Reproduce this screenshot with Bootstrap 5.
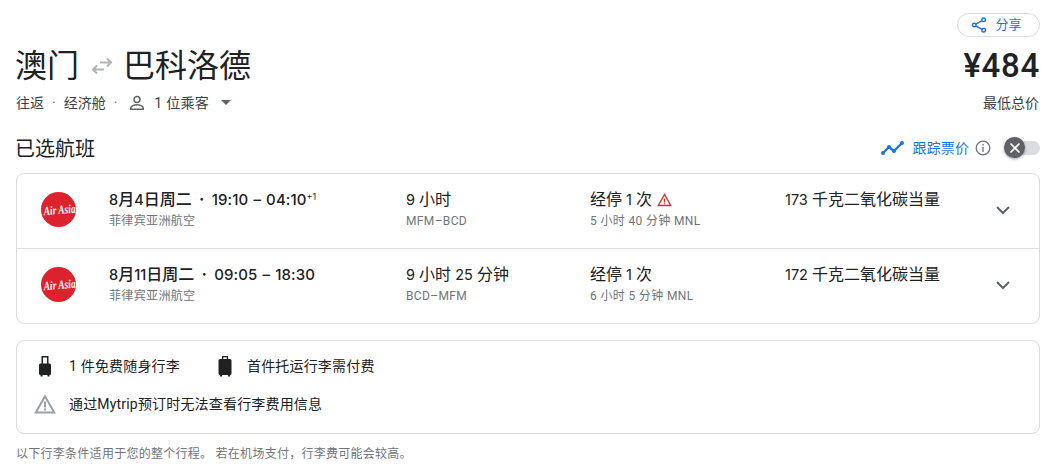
<!DOCTYPE html>
<html lang="zh-CN">
<head>
<meta charset="utf-8">
<title>航班</title>
<link href="https://cdn.jsdelivr.net/npm/bootstrap@5.3.0/dist/css/bootstrap.min.css" rel="stylesheet">
<style>
html,body{height:469px;overflow:hidden;background:#fff}
body{font-family:Roboto,"Noto Sans CJK SC",sans-serif;color:#202124;font-size:14px;line-height:20px}
.pg{padding:13px 14px 0 16px}
.share-btn{height:24px;width:83px;border:1px solid #dadce0;border-radius:12px;color:#1a73e8;font-size:13px;background:#fff;gap:8px;padding:0 4px 0 0}
.title-row{height:56px;padding-top:2px}
.ttl{font-size:32px;line-height:54px;font-weight:400;color:#202124;margin-left:-1px}
.swap{margin:0 11px 0 12px;width:22px;height:22px}
.price{font-size:33px;line-height:54px;font-weight:500;color:#202124;letter-spacing:.7px}
.meta{height:19px;color:#3c4043;font-size:14px}
.dot{margin:0 8px;color:#5f6368}
.who-ic{margin:0 7px 0 2px}
.who{letter-spacing:.25px}
.low{font-size:14px;color:#3c4043;padding-right:1px}
.sec{margin-top:17px;height:38px}
.sec-t{font-size:20px;line-height:28px;color:#202124;margin-left:-1px;padding-top:2px}
.track{color:#1a73e8;font-size:14px;letter-spacing:.1px}
.info-ic{margin-left:6px}
.tog{width:35px;height:14px;border-radius:7px;background:#dadce0;margin-left:14px;position:relative}
.knob{position:absolute;left:-1px;top:-4px;width:21px;height:21px;border-radius:50%;background:#5f6368;box-shadow:0 1px 3px rgba(60,64,67,.5);display:flex;align-items:center;justify-content:center}
.flights{margin-top:6px;border:1px solid #dadce0;border-radius:8px;width:1024px}
.frow{height:74px;padding:15px 0 0 24px}
.frow+.frow{height:75px;border-top:1px solid #dadce0}
.logo-c{width:35px;height:35px;margin:3px 33px 0 0;flex:none}
.c1{width:297px}.c2{width:184px}.c3{width:195px}.c4{width:210px}
.f-main{font-family:Inter,"Noto Sans CJK SC",sans-serif;font-size:16px;line-height:20px;color:#202124}
.dg{font-size:14.5px}
.tm{font-weight:500;white-space:nowrap}
.tt{font-size:15px;letter-spacing:.1px;word-spacing:1px}
.tm sup{font-size:9px;font-weight:400;top:-.6em;letter-spacing:0}
.sep{display:inline-block;width:20px;text-align:center;font-weight:700}
.f-sub{font-size:12px;line-height:16px;color:#70757a;letter-spacing:.35px;margin-top:3px}
.warn-s{margin-left:5px}
.chev{margin-top:13px}
.bags{margin-top:16px;height:94px;border:1px solid #dadce0;border-radius:8px;width:1024px;padding:12px 0 0 20px;font-size:14px;letter-spacing:.18px}
.bag-r{height:25px}
.bag-ic{width:16px;height:22px;margin-right:16px}
.bag-2{margin:0 14px 0 37px}
.warn-ic{width:22px;height:20px;margin:0 13px 0 -3px}
.bag-w{margin-top:13px}
.foot{margin-top:10px;font-size:12px;color:#70757a;line-height:20px;letter-spacing:.27px}
.caret{width:0;height:0;border-left:5px solid transparent;border-right:5px solid transparent;border-top:5px solid #5f6368;margin-left:12px}
.lg-t{font-family:"Liberation Serif",serif;font-style:italic;font-weight:700;font-size:9.5px;fill:#fff}
</style>
</head>
<body>
<div class="pg">
  <div class="d-flex justify-content-end">
    <button class="share-btn d-flex align-items-center justify-content-center" type="button">
      <svg width="16" height="16" viewBox="0 0 16 16" fill="none" stroke="#1a73e8" stroke-width="1.4"><circle cx="12.600" cy="2.800" r="1.800"/><circle cx="3.200" cy="8" r="1.800"/><circle cx="12.600" cy="13.200" r="1.800"/><path d="M4.800 7.100 11 3.700M4.800 8.900l6.200 3.400"/></svg>
      <span>分享</span>
    </button>
  </div>
  <div class="title-row d-flex justify-content-between">
    <div class="d-flex align-items-center">
      <span class="ttl">澳门</span>
      <svg class="swap" viewBox="0 0 22 22" fill="none" stroke="#b0b3b8" stroke-width="2"><path d="M9 7.500h11M16 3.500l4 4-4 4"/><path d="M13 14.500H2M6 10.500l-4 4 4 4"/></svg>
      <span class="ttl">巴科洛德</span>
    </div>
    <div class="price">¥484</div>
  </div>
  <div class="meta d-flex justify-content-between align-items-center">
    <div class="d-flex align-items-center">
      <span>往返</span><span class="dot">·</span><span>经济舱</span><span class="dot">·</span>
      <svg class="who-ic" width="20" height="20" viewBox="0 0 20 20" fill="none" stroke="#5f6368" stroke-width="1.500"><circle cx="10" cy="6.500" r="3"/><path d="M3.800 16.200v-1.400c0-1.900 3.600-3 6.200-3s6.200 1.100 6.200 3v1.400z"/></svg>
      <span class="who">1 位乘客</span><span class="caret"></span>
    </div>
    <div class="low">最低总价</div>
  </div>
  <div class="sec d-flex justify-content-between align-items-center">
    <div class="sec-t">已选航班</div>
    <div class="d-flex align-items-center">
      <svg class="me-2" width="24" height="16" viewBox="0 0 24 16" fill="#1a73e8" stroke="#1a73e8" stroke-width="2.400"><path d="M2 13l6-6 5 4 8-8" fill="none"/><circle cx="2" cy="13" r=".8"/><circle cx="8" cy="7" r=".8"/><circle cx="13" cy="11" r=".8"/><circle cx="21" cy="3" r=".8"/></svg>
      <span class="track">跟踪票价</span>
      <svg class="info-ic" width="16" height="16" viewBox="0 0 16 16" fill="none" stroke="#70757a" stroke-width="1.300"><circle cx="8" cy="8" r="6.800"/><path d="M8 7v5M8 4v1.600"/></svg>
      <div class="tog"><div class="knob"><svg width="12" height="12" viewBox="0 0 12 12" stroke="#fff" stroke-width="1.600"><path d="M1.500 1.500l9 9M10.500 1.500l-9 9"/></svg></div></div>
    </div>
  </div>

  <div class="flights">
    <div class="frow d-flex">
      <svg class="logo-c" viewBox="0 0 35 35"><circle cx="17.500" cy="17.500" r="17.500" fill="#dc222c"/><text class="lg-t" transform="rotate(-5 17.500 17.500) translate(2.500 22) scale(1 1.300)">Air Asia</text></svg>
      <div class="c1"><div class="f-main tm"><span class="dg">8</span>月<span class="dg">4</span>日周二<span class="sep">·</span><span class="tt">19:10 – 04:10</span><sup>+1</sup></div><div class="f-sub">菲律宾亚洲航空</div></div>
      <div class="c2"><div class="f-main"><span class="dg">9 </span>小时</div><div class="f-sub">MFM–BCD</div></div>
      <div class="c3"><div class="f-main d-flex align-items-center"><span>经停<span class="dg"> 1 </span>次</span><svg class="warn-s" width="15" height="14" viewBox="0 0 15 14" fill="none" stroke="#d93025" stroke-width="1.400"><path d="M7.500 1.500 1.300 12.500h12.400zM7.500 5.500v4M7.500 10.300v1"/></svg></div><div class="f-sub">5 小时 40 分钟 MNL</div></div>
      <div class="c4"><div class="f-main"><span class="dg">173 </span>千克二氧化碳当量</div></div>
      <svg class="chev" width="16" height="16" viewBox="0 0 16 16" fill="none" stroke="#5f6368" stroke-width="2"><path d="M2 5l6 6 6-6"/></svg>
    </div>
    <div class="frow d-flex">
      <svg class="logo-c" viewBox="0 0 35 35"><circle cx="17.500" cy="17.500" r="17.500" fill="#dc222c"/><text class="lg-t" transform="rotate(-5 17.500 17.500) translate(2.500 22) scale(1 1.300)">Air Asia</text></svg>
      <div class="c1"><div class="f-main tm"><span class="dg">8</span>月<span class="dg">11</span>日周二<span class="sep">·</span><span class="tt">09:05 – 18:30</span></div><div class="f-sub">菲律宾亚洲航空</div></div>
      <div class="c2"><div class="f-main"><span class="dg">9 </span>小时<span class="dg"> 25 </span>分钟</div><div class="f-sub">BCD–MFM</div></div>
      <div class="c3"><div class="f-main">经停<span class="dg"> 1 </span>次</div><div class="f-sub">6 小时 5 分钟 MNL</div></div>
      <div class="c4"><div class="f-main"><span class="dg">172 </span>千克二氧化碳当量</div></div>
      <svg class="chev" width="16" height="16" viewBox="0 0 16 16" fill="none" stroke="#5f6368" stroke-width="2"><path d="M2 5l6 6 6-6"/></svg>
    </div>
  </div>

  <div class="bags">
    <div class="bag-r d-flex align-items-center">
      <svg class="bag-ic" viewBox="0 0 16 22" fill="#202124"><path d="M4.500 1h7v7.500h1a1.500 1.500 0 0 1 1.500 1.500v8.500a1.500 1.500 0 0 1-1.500 1.500h-9A1.500 1.500 0 0 1 2 18.500V10a1.500 1.500 0 0 1 1.500-1.500h1zM6 2.500v6h4v-6zM3.500 20h2v1.500h-2zm7 0h2v1.500h-2z"/></svg>
      <span>1 件免费随身行李</span>
      <svg class="bag-ic bag-2" viewBox="0 0 16 22" fill="#202124"><path d="M5 1h6v3h2A1.500 1.500 0 0 1 14.500 5.500v13A1.500 1.500 0 0 1 13 20H3a1.500 1.500 0 0 1-1.500-1.500v-13A1.500 1.500 0 0 1 3 4h2zm1.300 1.300V4h3.400V2.300zM3 20h2v1.500H3zm8 0h2v1.500h-2z"/></svg>
      <span>首件托运行李需付费</span>
    </div>
    <div class="bag-r bag-w d-flex align-items-center">
      <svg class="warn-ic" viewBox="0 0 22 20" fill="none" stroke="#9aa0a6" stroke-width="2"><path d="M11 2.200 1.800 18.500h18.400zM11 7.500v6M11 14.500v2"/></svg>
      <span>通过Mytrip预订时无法查看行李费用信息</span>
    </div>
  </div>
  <div class="foot">以下行李条件适用于您的整个行程。 若在机场支付，行李费可能会较高。</div>
</div>
<script src="https://cdn.jsdelivr.net/npm/bootstrap@5.3.0/dist/js/bootstrap.bundle.min.js"></script>
</body>
</html>
